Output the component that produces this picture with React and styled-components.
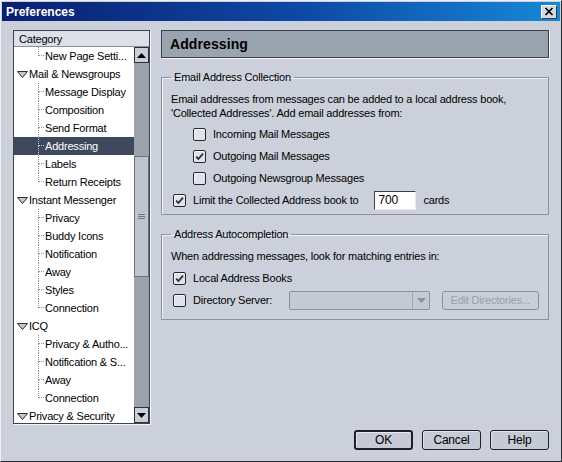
import React from "react";
import styled, { createGlobalStyle } from "styled-components";

const GlobalStyle = createGlobalStyle`
  html, body {
    margin: 0;
    padding: 0;
    background: #cbd0da;
  }
`;

const Window = styled.div`
  width: 562px;
  height: 462px;
  box-sizing: border-box;
  background: #cbd0da;
  border: 1px solid;
  border-color: #eef0f4 #2b2e33 #2b2e33 #eef0f4;
  padding: 1px;
  display: flex;
  flex-direction: column;
  font-family: "Liberation Sans", Arial, sans-serif;
  font-size: 11px;
  letter-spacing: -0.2px;
  color: #000;
`;

const TitleBar = styled.div`
  height: 19px;
  flex: none;
  display: flex;
  align-items: center;
  justify-content: space-between;
  background: linear-gradient(to right, #0a1f6e 0%, #0e4aa8 55%, #1688d6 100%);
  padding-left: 4px;
`;

const TitleText = styled.span`
  color: #fff;
  font-weight: bold;
  font-size: 12px;
  letter-spacing: 0;
`;

const CloseButton = styled.button`
  width: 16px;
  height: 14px;
  margin-right: 3px;
  padding: 0;
  display: flex;
  align-items: center;
  justify-content: center;
  background: #d5d9e1;
  border: 1px solid;
  border-color: #fff #3a3d44 #3a3d44 #fff;
`;

const Body = styled.div`
  flex: 1;
  display: flex;
  flex-direction: column;
  padding: 9px 11px 0 11px;
`;

const Main = styled.div`
  display: flex;
  gap: 11px;
  height: 395px;
`;

const LeftPanel = styled.div`
  width: 137px;
  height: 394px;
  box-sizing: border-box;
  border: 1px solid #3f444d;
  box-shadow: 1px 1px 0 #f4f6f9;
  display: flex;
  flex-direction: column;
  overflow: hidden;
`;

const PanelHeader = styled.div`
  height: 16px;
  box-sizing: border-box;
  flex: none;
  background: #dde0e8;
  border-bottom: 1px solid #8a909a;
  padding: 1px 0 0 5px;
  line-height: 14px;
`;

const ListArea = styled.div`
  flex: 1;
  display: flex;
  min-height: 0;
`;

const TreeList = styled.div`
  flex: 1;
  background: #fff;
  overflow: hidden;
`;

const Row = styled.div`
  height: 18px;
  display: flex;
  align-items: center;
  white-space: nowrap;
  padding-left: ${(p) => (p.$parent ? "3px" : "24px")};
  background: ${(p) => (p.$selected ? "#3d485c" : "transparent")};
  color: ${(p) => (p.$selected ? "#fff" : "#000")};
`;

const Branch = styled.span`
  width: 6px;
  height: 18px;
  margin-right: 1px;
  display: flex;
  flex-direction: column;
  flex: none;
`;

const BranchTop = styled.span`
  height: 9px;
  box-sizing: border-box;
  border-left: 1px dotted ${(p) => (p.$selected ? "#c8ccd5" : "#8a8f98")};
  border-bottom: 1px dotted ${(p) => (p.$selected ? "#c8ccd5" : "#8a8f98")};
`;

const BranchBottom = styled.span`
  height: 9px;
  box-sizing: border-box;
  border-left: 1px dotted
    ${(p) => (p.$last ? "transparent" : p.$selected ? "#c8ccd5" : "#8a8f98")};
`;

const Twisty = styled.svg`
  width: 11px;
  height: 7px;
  margin-right: 1px;
  flex: none;
`;

const ScrollBar = styled.div`
  width: 15px;
  flex: none;
  display: flex;
  flex-direction: column;
  background: #9ca2ac;
`;

const ArrowButton = styled.div`
  height: 16px;
  box-sizing: border-box;
  flex: none;
  background: #c9ced7;
  border: 1px solid #2c3038;
  display: flex;
  align-items: center;
  justify-content: center;
`;

const Track = styled.div`
  flex: 1;
  display: flex;
  flex-direction: column;
`;

const TrackGap = styled.div`
  height: ${(p) => p.$h}px;
  flex: none;
`;

const Thumb = styled.div`
  height: 121px;
  flex: none;
  box-sizing: border-box;
  background: #bfc5cf;
  border: 1px solid #6d737d;
  display: flex;
  flex-direction: column;
  align-items: center;
  justify-content: center;
  gap: 1px;
`;

const Grip = styled.span`
  width: 7px;
  height: 1px;
  background: #707682;
`;

const RightPanel = styled.div`
  flex: 1;
  display: flex;
  flex-direction: column;
`;

const PageHeader = styled.div`
  height: 28px;
  box-sizing: border-box;
  border: 1px solid #3b414c;
  box-shadow: 1px 1px 0 #f4f6f9;
  background: #9aa3b0;
  padding-left: 8px;
  display: flex;
  align-items: center;
  font-weight: bold;
  font-size: 14px;
  letter-spacing: 0.1px;
`;

const Group = styled.fieldset`
  margin: ${(p) => p.$top}px 0 0 0;
  border: 1px solid #8d939d;
  box-shadow: inset 1px 1px 0 #eef1f5;
  padding: 8px 9px ${(p) => p.$bottom}px 9px;
  min-width: 0;
`;

const Legend = styled.legend`
  padding: 0 3px;
  margin-left: 0;
  line-height: 14px;
`;

const Para = styled.p`
  margin: 0;
  line-height: 14px;
`;

const CheckRow = styled.div`
  display: flex;
  align-items: center;
  height: 22px;
  padding-left: ${(p) => (p.$indent ? "22px" : "2px")};
  margin-top: ${(p) => p.$mt || 0}px;
`;

const Box = styled.span`
  width: 13px;
  height: 13px;
  box-sizing: border-box;
  flex: none;
  border: 1px solid #23272e;
  border-radius: 2px;
  background: #dfe3ea;
  box-shadow: inset 1px 1px 0 #f6f8fb;
  margin-right: 7px;
  display: flex;
  align-items: center;
  justify-content: center;
`;

const NumberInput = styled.div`
  width: 42px;
  height: 19px;
  box-sizing: border-box;
  margin-left: 16px;
  border: 1px solid;
  border-color: #3a3e46 #e8ebf0 #e8ebf0 #3a3e46;
  background: #fff;
  padding-left: 3px;
  display: flex;
  align-items: center;
  font-size: 12px;
`;

const Unit = styled.span`
  margin-left: 7px;
`;

const ServerLabel = styled.span`
  width: 96px;
  flex: none;
`;

const Select = styled.div`
  width: 141px;
  height: 19px;
  box-sizing: border-box;
  border: 1px solid #8c929c;
  border-radius: 2px;
  background: #c4c9d3;
  display: flex;
  justify-content: flex-end;
`;

const SelectArrow = styled.span`
  width: 16px;
  border-left: 1px solid #a2a8b2;
  display: flex;
  align-items: center;
  justify-content: center;
`;

const DisabledButton = styled.div`
  width: 97px;
  height: 19px;
  box-sizing: border-box;
  margin-left: 12px;
  border: 1px solid #8c929c;
  border-radius: 3px;
  background: #c8cdd7;
  color: #9aa0aa;
  display: flex;
  align-items: center;
  justify-content: center;
`;

const Footer = styled.div`
  display: flex;
  justify-content: flex-end;
  gap: 9px;
  margin-top: 5px;
`;

const Button = styled.button`
  width: 59px;
  height: 20px;
  box-sizing: border-box;
  padding: 0;
  border: ${(p) => (p.$default ? "2px" : "1px")} solid #1e2127;
  border-radius: 3px;
  background: #c5cad4;
  box-shadow: inset 1px 1px 0 #e3e6ec;
  font-family: "Liberation Sans", Arial, sans-serif;
  font-size: 12px;
  letter-spacing: -0.2px;
  color: #000;
`;

const tree = [
  { label: "New Page Setti...", last: true },
  { label: "Mail & Newsgroups", parent: true },
  { label: "Message Display" },
  { label: "Composition" },
  { label: "Send Format" },
  { label: "Addressing", selected: true },
  { label: "Labels" },
  { label: "Return Receipts", last: true },
  { label: "Instant Messenger", parent: true },
  { label: "Privacy" },
  { label: "Buddy Icons" },
  { label: "Notification" },
  { label: "Away" },
  { label: "Styles" },
  { label: "Connection", last: true },
  { label: "ICQ", parent: true },
  { label: "Privacy & Autho..." },
  { label: "Notification & S..." },
  { label: "Away" },
  { label: "Connection", last: true },
  { label: "Privacy & Security", parent: true },
];

const Check = ({ checked }) => (
  <Box>
    {checked && (
      <svg width="9" height="9" viewBox="0 0 9 9">
        <path d="M1.2 4.6 L3.4 7 L8 1.6" fill="none" stroke="#2a2e35" strokeWidth="1.8" />
      </svg>
    )}
  </Box>
);

const Arrow = ({ up, color = "#000" }) => (
  <svg width="9" height="5" viewBox="0 0 9 5">
    <polygon points={up ? "4.5,0 9,5 0,5" : "0,0 9,0 4.5,5"} fill={color} />
  </svg>
);

export default function App() {
  return (
    <>
      <GlobalStyle />
      <Window>
        <TitleBar>
          <TitleText>Preferences</TitleText>
          <CloseButton>
            <svg width="10" height="9" viewBox="0 0 10 9">
              <path d="M1.5 1 L8.5 8 M8.5 1 L1.5 8" stroke="#000" strokeWidth="1.7" />
            </svg>
          </CloseButton>
        </TitleBar>
        <Body>
          <Main>
            <LeftPanel>
              <PanelHeader>Category</PanelHeader>
              <ListArea>
                <TreeList>
                  {tree.map((item, i) =>
                    item.parent ? (
                      <Row key={i} $parent>
                        <Twisty viewBox="0 0 11 7">
                          <polygon points="0.5,0.5 10.5,0.5 5.5,6.5" fill="#c2c7d0" stroke="#2a2e35" />
                        </Twisty>
                        {item.label}
                      </Row>
                    ) : (
                      <Row key={i} $selected={item.selected}>
                        <Branch>
                          <BranchTop $selected={item.selected} />
                          <BranchBottom $selected={item.selected} $last={item.last} />
                        </Branch>
                        {item.label}
                      </Row>
                    )
                  )}
                </TreeList>
                <ScrollBar>
                  <ArrowButton>
                    <Arrow up />
                  </ArrowButton>
                  <Track>
                    <TrackGap $h={93} />
                    <Thumb>
                      <Grip />
                      <Grip />
                      <Grip />
                    </Thumb>
                  </Track>
                  <ArrowButton>
                    <Arrow />
                  </ArrowButton>
                </ScrollBar>
              </ListArea>
            </LeftPanel>

            <RightPanel>
              <PageHeader>Addressing</PageHeader>

              <Group $top={12} $bottom={3}>
                <Legend>Email Address Collection</Legend>
                <Para>
                  Email addresses from messages can be added to a local address book,
                  <br />
                  'Collected Addresses'. Add email addresses from:
                </Para>
                <CheckRow $indent $mt={3}>
                  <Check />
                  Incoming Mail Messages
                </CheckRow>
                <CheckRow $indent>
                  <Check checked />
                  Outgoing Mail Messages
                </CheckRow>
                <CheckRow $indent>
                  <Check />
                  Outgoing Newsgroup Messages
                </CheckRow>
                <CheckRow>
                  <Check checked />
                  Limit the Collected Address book to
                  <NumberInput>700</NumberInput>
                  <Unit>cards</Unit>
                </CheckRow>
              </Group>

              <Group $top={12} $bottom={8}>
                <Legend>Address Autocompletion</Legend>
                <Para>When addressing messages, look for matching entries in:</Para>
                <CheckRow $mt={4}>
                  <Check checked />
                  Local Address Books
                </CheckRow>
                <CheckRow>
                  <Check />
                  <ServerLabel>Directory Server:</ServerLabel>
                  <Select>
                    <SelectArrow>
                      <Arrow color="#8b919b" />
                    </SelectArrow>
                  </Select>
                  <DisabledButton>Edit Directories...</DisabledButton>
                </CheckRow>
              </Group>
            </RightPanel>
          </Main>
          <Footer>
            <Button $default>OK</Button>
            <Button>Cancel</Button>
            <Button>Help</Button>
          </Footer>
        </Body>
      </Window>
    </>
  );
}
